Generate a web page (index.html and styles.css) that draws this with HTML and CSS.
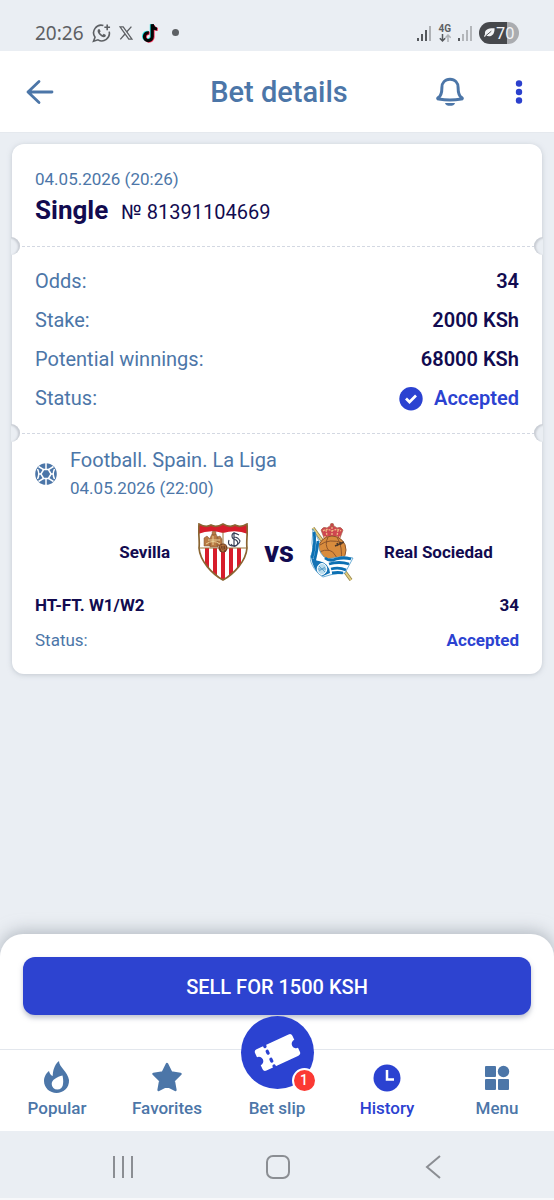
FILE: index.html
```html
<!DOCTYPE html>
<html lang="en">
<head>
<meta charset="utf-8">
<meta name="viewport" content="width=device-width, initial-scale=1">
<title>Bet details</title>
<link rel="stylesheet" href="styles.css">
</head>
<body>
<div class="screen">
  <div class="statusbar">
    <div class="status-left">
      <span class="clock">20:26</span>
      <svg class="i20" viewBox="0 0 20 20" fill="none" stroke="#5d6064" stroke-width="1.7"><path d="M12 2.1A8 8 0 0 0 3.200 14.400L1.600 18.600l4.700-1.400A8 8 0 0 0 18.100 8.500"/><path d="M16 1v6M13 4h6"/><path d="M6.300 6.200l1.500-.5 1.300 2.500-.9 1.200q1.100 2 2.900 2.700l1.200-1.200 2.300 1.300-.5 1.700q-1.700 1.200-4.500-.6T6 8.900Q5.700 7.200 6.300 6.200z" fill="#5d6064" stroke="none"/></svg>
      <svg class="i14" viewBox="0 0 14 14" fill="none" stroke="#5d6064"><path d="M1 .8h3.200L13 13.200H9.800z" stroke-width="1.3"/><path d="M12.400.6L7.600 6M6.200 7.800L1.300 13.400" stroke-width="1.3"/></svg>
      <svg class="tiktok" viewBox="0 0 18 20"><g fill="none" stroke-width="3.200"><path stroke="#25e5df" d="M7 9.300a3.900 3.900 0 1 0 3.400 4V1.200c.5 2.700 2 4.100 4.800 4.300"/><path stroke="#fb2c55" d="M8.600 10.300a3.900 3.900 0 1 0 3.400 4V2.200c.5 2.700 2 4.100 4.800 4.300"/><path stroke="#050505" d="M7.800 9.800a3.900 3.900 0 1 0 3.400 4V1.200c.5 2.900 2 4.500 4.800 4.800"/></g></svg>
      <span class="dot"></span>
    </div>
    <div class="status-right">
      <svg class="signal" viewBox="0 0 14 16" fill="#55585c"><path d="M0 13h2v3H0zM4 9h2v7H4zM8 5h2v11H8z"/><path d="M12 1h2v15h-2z" fill="#aeb1b5"/></svg>
      <div class="net"><span>4G</span><svg viewBox="0 0 12 8" fill="none" stroke="#55585c" stroke-width="1.500"><path d="M3.500 0v7M.8 4.200l2.700 2.700 2.700-2.700"/><path stroke="#aeb1b5" d="M9 8V1M6.500 3.700L9 1l2.700 2.700"/></svg></div>
      <svg class="signal" viewBox="0 0 14 16" fill="#b3b6ba"><path d="M0 13h2v3H0z" fill="#55585c"/><path d="M4 9h2v7H4zM8 5h2v11H8zM12 1h2v15h-2z"/></svg>
      <div class="battery"><svg viewBox="0 0 12 12"><path d="M11.500.7C4 .5.400 2.400 1.100 7.400L0 9.600l1 .7 1.100-1.500C8 11 11.800 7.500 11.500.7z" fill="#f3f4f6"/><path d="M2 9L8 4" stroke="#46484c" stroke-width="1"/></svg><span>70</span></div>
    </div>
  </div>

  <header class="topbar">
    <button class="icon-btn" aria-label="Back"><svg width="28" height="28" viewBox="0 0 28 28" fill="none" stroke="#4c76a8" stroke-width="2.800" stroke-linecap="round" stroke-linejoin="round"><path d="M26 14H2M13 3.500L2 14l11 10.500"/></svg></button>
    <h1>Bet details</h1>
    <button class="icon-btn" aria-label="Notifications"><svg width="28" height="30" viewBox="0 0 28 30" fill="none" stroke="#4c76a8" stroke-width="3" stroke-linejoin="round"><path d="M14 2.300C8.800 2.300 5.900 6 5.900 10.500c0 6-1 8.700-3.600 10.100-1 .6-.7 1.500.4 1.500q11.300 1.700 22.600 0c1.100 0 1.400-.9.400-1.500-2.600-1.400-3.600-4.100-3.600-10.100 0-4.500-2.900-8.200-8.100-8.200z"/><path d="M9 26h10c-.5 3.800-9.500 3.800-10 0z" fill="#4c76a8" stroke="none"/></svg></button>
    <button class="icon-btn more" aria-label="More options"><svg width="8" height="24" viewBox="0 0 8 24" fill="#2b40cd"><circle cx="4" cy="3.500" r="3.200"/><circle cx="4" cy="12" r="3.200"/><circle cx="4" cy="20.500" r="3.200"/></svg></button>
  </header>

  <main class="content">
    <article class="ticket">
      <section class="ticket-head">
        <time class="muted small">04.05.2026 (20:26)</time>
        <div class="ticket-title"><h2>Single</h2><span>№ 81391104669</span></div>
      </section>
      <section class="summary cut">
        <dl>
          <div><dt>Odds:</dt><dd>34</dd></div>
          <div><dt>Stake:</dt><dd>2000 KSh</dd></div>
          <div><dt>Potential winnings:</dt><dd>68000 KSh</dd></div>
          <div><dt>Status:</dt><dd class="accepted"><svg width="24" height="24" viewBox="0 0 24 24"><circle cx="12" cy="11.700" r="11.700" fill="#2b42d1"/><path d="M7 11.500l3.500 3.500L17 8.500" fill="none" stroke="#fff" stroke-width="2.700"/></svg>Accepted</dd></div>
        </dl>
      </section>
      <section class="event cut">
        <div class="league">
          <svg width="22" height="22" viewBox="0 0 22 22"><circle cx="11" cy="11" r="10.800" fill="#4c76a8"/><g fill="none" stroke="#fff" stroke-width="1.500"><path d="M8.600 6.600h4.800l2.700 4.400-2.700 4.400H8.600L5.900 11z"/><path d="M11 0v6.600M11 15.400V22M8.600 6.600L3.500 3.500M13.400 6.600l5.100-3.100M8.600 15.400l-5.100 3.100M13.400 15.400l5.100 3.100M16.100 11H18M5.900 11H4"/><path d="M2.500 6Q5 11 2.500 16M19.500 6Q17 11 19.500 16"/></g></svg>
          <div><p class="league-name">Football. Spain. La Liga</p><time class="small">04.05.2026 (22:00)</time></div>
        </div>
        <div class="match">
          <span class="team home">Sevilla</span>
          <svg class="crest" viewBox="0 0 50 58" role="img" aria-label="Sevilla crest">
            <defs><clipPath id="shield"><path d="M1 1Q8 5 13 2q5 3 12-1 7 4 12 1 5 3 12-1c1 10-1 17 0 24-1 13-13 26-24 32C14 51 2 38 1 25 2 18 0 11 1 1z"/></clipPath></defs>
            <g clip-path="url(#shield)"><path fill="#fff" d="M0 0h50v58H0z"/><path fill="#d71d2b" d="M0 0h50v11Q38 6 25 10 12 6 0 11zM7 25h4v34H7zM15 25h4v34h-4zM23 25h4v34h-4zM31 25h4v34h-4zM39 25h4v34h-4z"/><path d="M1 25h48M25 9v16" stroke="#9b743b"/><g fill="#b97b45" stroke="#7c5030" stroke-width=".5"><path d="M6 23v-8l3-2 3 3v7zM19 23v-9l3-1 2 3v7zM12 24v-9l2-4h4l2 4v9z"/><circle cx="16" cy="10" r="2"/></g><path d="M8 21q7-5 14 0M10 17h12M15 13v9" stroke="#ecd097" fill="none"/><path d="M41 12q-7-4-7 1 0 3 4 4 3 2 1 5-3 3-6-1M31 17q-2 5 3 6 7 0 8-5-2-4-6-4M36 9v15" fill="none" stroke="#394158" stroke-width="1.200"/><circle cx="25" cy="25" r="4.500" fill="#713f24"/><path d="M22 23l5-1 1 4-4 2zM25 21v8" fill="none" stroke="#bd7b42" stroke-width=".8"/></g>
            <path d="M1 1Q8 5 13 2q5 3 12-1 7 4 12 1 5 3 12-1c1 10-1 17 0 24-1 13-13 26-24 32C14 51 2 38 1 25 2 18 0 11 1 1z" fill="none" stroke="#8a6532" stroke-width="1.700"/>
          </svg>
          <span class="versus">vs</span>
          <svg class="crest" viewBox="0 0 46 58" role="img" aria-label="Real Sociedad crest">
            <g fill="#cf4650" stroke="#a9684c" stroke-width=".7"><path d="M14 15L11 7q2-4 6-2 5-5 10 0 4-2 6 2l-3 8z"/><circle cx="22" cy="2" r="1.700" fill="#c84448"/></g><path d="M14 14h16M16 7l1 6M22 4v9M28 7l-1 6M13 8q4-3 9 0 5-3 9 0" stroke="#efb982" stroke-width="1.300" stroke-dasharray="2 1" fill="none"/>
            <path d="M3 5L41 57" stroke="#948344" stroke-width="3.400"/><path d="M3 5L41 57" stroke="#e1cc80" stroke-width="2"/>
            <circle cx="22" cy="27" r="14" fill="#d98c3d" stroke="#8e552b"/><path d="M10 22q9-7 23-2M9 29q12-5 16 3t9 1M18 14q-4 8 1 14M27 14q6 10 4 24" stroke="#8e552b" fill="none" stroke-width="1"/><path d="M25 23l9-4M27 20l1 3M30 19l1 3" stroke="#4f3929" stroke-width="1.500"/>
            <path d="M3 6l6 12q-2 9 5 16 4 3 9 1 9-3 20 0l-8 15q-12 0-22 4C7 51 0 41 0 34q4-5 2-14z" fill="#fff" stroke="#4e9ccc" stroke-width=".8"/>
            <path d="M4 9q2 10-2 26M8 18q-1 10-4 22" stroke="#0c70b3" stroke-width="2.800" fill="none"/>
            <path d="M15 35q5 4 11 1 8-2 15 0M19 41q10-3 20 0M21 46q8-2 15 1M22 50q6-1 11 0" stroke="#0c70b3" stroke-width="2.800" fill="none"/><path d="M1 34q5 4 8 4 10 2 11 12l-7 3Q4 50 1 34z" fill="#1473b5"/><ellipse cx="12" cy="46" rx="4.800" ry="5.500" fill="#b9dced" stroke="#fff"/><path d="M9 43l6 6M9 48l6-4M8 46h8" stroke="#5c9fca"/>
          </svg>
          <span class="team away">Real Sociedad</span>
        </div>
        <dl class="selection">
          <div class="outcome"><dt>HT-FT. W1/W2</dt><dd>34</dd></div>
          <div><dt>Status:</dt><dd class="accepted">Accepted</dd></div>
        </dl>
      </section>
    </article>
  </main>

  <footer class="bottom">
    <div class="sell-wrap"><button class="sell">SELL FOR 1500 KSH</button></div>
    <nav class="tabs" aria-label="Main navigation">
      <a href="#popular"><svg viewBox="-3 0 32 32"><path fill-rule="evenodd" d="M15 0C15 6 24 11 25 19c.5 8-6 13-12.500 13S0 27 0 20C0 15.500 2.500 12 5 10c.5 2 1.500 4.500 3.700 5C9 10 10 4 15 0zM18.500 14.500C13 16 7.700 18.500 7.700 23a5.650 5.500 0 0 0 11.300 0C19.500 20 19 17 18.500 14.500z" fill="#4c76a8"/></svg>Popular</a>
      <a href="#favorites"><svg viewBox="0 0 32 32"><path d="M16 3l4.200 8.500 9.300 1.400-6.800 6.600 1.700 9.500L16 24.700 7.600 29l1.700-9.500-6.800-6.600 9.300-1.400z" fill="#4c76a8" stroke="#4c76a8" stroke-width="2.500" stroke-linejoin="round"/></svg>Favorites</a>
      <a class="slip" href="#slip"><span class="slip-circle"><svg viewBox="0 0 48 48"><g transform="rotate(-25 24 24)"><path d="M6 12h36q3 0 3 3v4.500a4.500 4.500 0 0 0 0 9V33q0 3-3 3H6q-3 0-3-3v-4.500a4.500 4.500 0 0 0 0-9V15q0-3 3-3z" fill="#fff"/><path d="M15 12v1M15 18.500v2M15 27.500v2M15 35v1" stroke="#2b42d1" stroke-width="3.400" stroke-linecap="round"/></g></svg><span class="badge">1</span></span>Bet slip</a>
      <a class="active" href="#history"><svg viewBox="0 0 32 32"><circle cx="16" cy="17" r="13.500" fill="#2b42d1"/><path d="M16 9v9.500h7" stroke="#fff" stroke-width="2.500" fill="none"/></svg>History</a>
      <a href="#menu"><svg viewBox="0 0 32 32" fill="#4c76a8"><rect x="4" y="5" width="11" height="11" rx="1"/><circle cx="22.500" cy="10.500" r="5.700"/><rect x="4" y="18" width="11" height="11" rx="1"/><rect x="17" y="18" width="11" height="11" rx="1"/></svg>Menu</a>
    </nav>
    <div class="android">
      <button aria-label="Recent apps"><svg viewBox="0 0 24 24"><path d="M3 1v22M12 1v22M21 1v22"/></svg></button>
      <button aria-label="Home"><svg viewBox="0 0 24 24"><rect x="1" y="1" width="22" height="22" rx="6"/></svg></button>
      <button aria-label="System back"><svg viewBox="0 0 24 24"><path d="M19 1L6 12l13 11"/></svg></button>
    </div>
  </footer>
</div>
</body>
</html>
```
FILE: styles.css
```css
* { box-sizing: border-box; }
body { margin: 0; background: #eaeef3; color: #120b50; font-family: Roboto, sans-serif; }
h1, h2, p, dl, dd { margin: 0; }
button { border: 0; padding: 0; background: none; font: inherit; color: inherit; }
svg { display: block; }
.screen { min-height: 100vh; display: flex; flex-direction: column; }
.statusbar { height: 51px; padding: 14px 35px 0; display: flex; justify-content: space-between; color: #5d6064; }
.status-left, .status-right { height: 37px; display: flex; align-items: center; }
.status-left { gap: 8px; }
.clock { font: 19px/24px "Noto Sans", sans-serif; }
.i20 { width: 19px; height: 20px; }
.i14 { width: 14px; height: 14px; }
.tiktok { width: 18px; height: 20px; }
.dot { width: 7px; height: 7px; margin-left: 5px; border-radius: 50%; background: #5d6064; }
.status-right { gap: 7px; }
.signal { width: 14px; height: 16px; }
.net { display: grid; justify-items: center; font: 700 10px/10px Roboto, sans-serif; }
.net svg { width: 12px; height: 8px; }
.battery { width: 40px; height: 22px; padding-left: 5px; border-radius: 11px; display: flex; align-items: center; gap: 1px; background: linear-gradient(90deg, #46484c 70%, #aaacb0 70%); color: #f3f4f6; font: 16px/22px "Noto Sans", sans-serif; }
.battery svg { width: 11px; height: 12px; }
.topbar { height: 82px; padding: 0 31px 0 26px; display: grid; grid-template-columns: 100px 1fr 36px 55px; align-items: center; background: #fff; border-bottom: 1px solid #e5e9ee; }
h1 { color: #4c76a8; text-align: center; font-size: 29px; line-height: 36px; font-weight: 500; }
.icon-btn { display: flex; justify-content: center; }
.icon-btn:first-child { justify-content: flex-start; }
.more { justify-content: flex-end; }
.content { flex: 1; padding: 11px 12px 32px; }
.ticket { border-radius: 12px; background: #fff; box-shadow: 0 1px 5px #9ca4af80; }
.ticket-head { padding: 24px 23px 16px; }
.small { display: block; font-size: 17px; line-height: 22px; }
.muted { color: #4c76a8; }
.ticket-title { padding-top: 2px; display: flex; align-items: baseline; gap: 13px; font-size: 20px; line-height: 36px; }
h2 { font-size: 26px; line-height: 36px; font-weight: 700; }
.cut { position: relative; background: repeating-linear-gradient(90deg, #d3d8e2 0 3px, #fff 3px 5px) top / 100% 1px no-repeat; }
.cut::before, .cut::after { content: ""; position: absolute; top: -9px; width: 9px; height: 18px; background: #eaeef3; }
.cut::before { left: -1px; border-radius: 0 9px 9px 0; box-shadow: inset -2px 1px 2px #c8ccd3; }
.cut::after { right: -1px; border-radius: 9px 0 0 9px; box-shadow: inset 2px 1px 2px #c8ccd3; }
.summary { padding: 16px 23px 15px; }
dl > div { display: flex; justify-content: space-between; }
dt { color: #4c76a8; }
.summary dl > div { font-size: 20px; line-height: 39px; }
dd { font-weight: 600; }
dd.accepted { display: flex; align-items: center; gap: 11px; color: #2b42d1; }
.event { padding: 13px 23px 16px; }
.league { display: flex; align-items: center; gap: 13px; color: #4c76a8; }
.league-name { font-size: 20px; line-height: 28px; }
.league .small { line-height: 28px; }
.match { margin: 18px 0 4px; height: 64px; display: grid; grid-template-columns: 1fr 50px 62px 46px 1fr; align-items: center; }
.crest { width: 100%; height: 58px; }
.team { font-size: 17px; line-height: 24px; font-weight: 700; }
.home { text-align: right; padding-right: 28px; }
.away { padding-left: 28px; white-space: nowrap; }
.versus { text-align: center; font-size: 29px; line-height: 32px; font-weight: 800; }
.selection > div { font-size: 17px; line-height: 35px; }
.selection .outcome { font-weight: 700; }
.selection .outcome dt { color: #120b50; }
.selection dd { font-weight: 700; }
.bottom { border-radius: 23px 23px 0 0; background: #fff; box-shadow: 0 -3px 16px #8f97a299; }
.sell-wrap { padding: 23px 23px 34px; }
.sell { width: 100%; height: 58px; padding-top: 2px; border-radius: 12px; background: #2d43d0; color: #fff; font-size: 20px; font-weight: 500; box-shadow: 0 3px 5px #7f879f80; }
.tabs { height: 82px; display: grid; grid-template-columns: repeat(5, 1fr); padding: 0 2px; border-top: 1px solid #e3e7ed; }
.tabs a { position: relative; display: flex; flex-direction: column; align-items: center; justify-content: flex-end; gap: 3px; padding-bottom: 11px; color: #4c76a8; text-decoration: none; font-size: 17px; line-height: 24px; font-weight: 500; }
.tabs a > svg { width: 32px; height: 32px; }
.tabs .active { color: #2b42d1; }
.slip-circle { position: absolute; top: -34px; width: 73px; height: 73px; display: grid; place-items: center; border-radius: 50%; background: #2b42d1; }
.slip-circle svg { width: 47px; height: 47px; }
.badge { position: absolute; right: -3px; bottom: -4px; width: 25px; height: 25px; border: 2px solid #fff; border-radius: 50%; background: #fb3933; color: #fff; text-align: center; font-size: 14px; line-height: 21px; }
.android { height: 69px; padding: 5px 44px 0 46px; display: grid; grid-template-columns: repeat(3, 1fr); align-items: center; background: #eaeef3; border-bottom: 2px solid #f7f8fa; }
.android button { display: flex; justify-content: center; }
.android svg { width: 24px; height: 24px; fill: none; stroke: #8b8e93; stroke-width: 2; }
```
